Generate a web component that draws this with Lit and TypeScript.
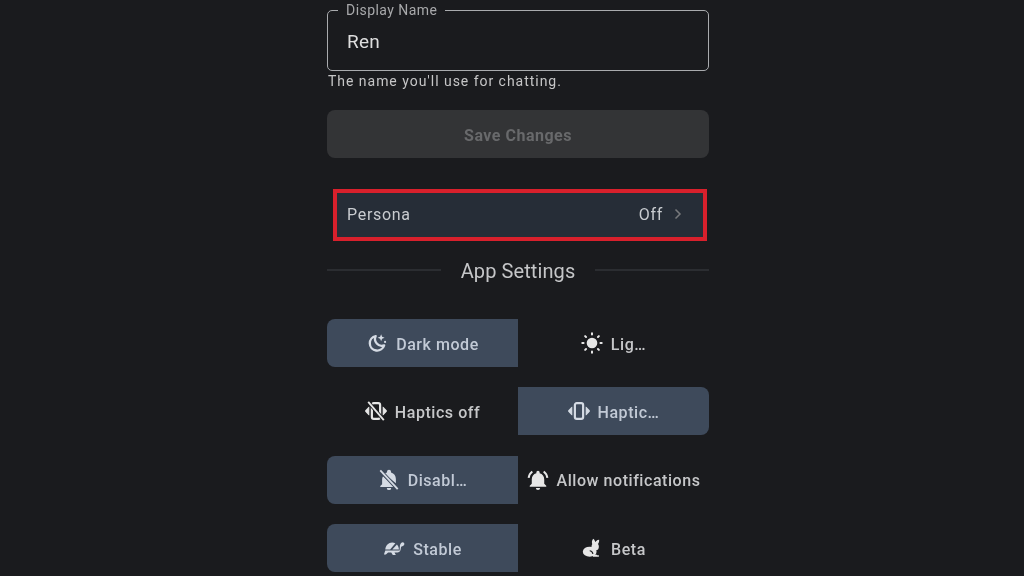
import { LitElement, html, css, svg } from "lit";
import { customElement } from "lit/decorators.js";

const vibBody = svg`<rect x="7.500" y="3.500" width="9" height="17" rx="2" fill="none" stroke="currentColor" stroke-width="2.400"/><path d="M4.300 7.500 1 10.900a1.600 1.600 0 0 0 0 2.200L4.300 16.500zM19.700 7.500l3.300 3.400a1.600 1.600 0 0 1 0 2.200L19.700 16.500z" fill="currentColor" stroke="currentColor" stroke-width="0.800" stroke-linejoin="round"/>`;

const icons = {
  moon: svg`<path d="M10.600 4.400a8 8 0 1 0 9.200 10.200 7.400 7.400 0 0 1-9.200-10.200z" fill="none" stroke="currentColor" stroke-width="2.500" stroke-linejoin="round"/><path d="M16.500 2.500l1.100 2.700 2.700 1.100-2.700 1.100-1.100 2.700-1.100-2.700-2.700-1.100 2.700-1.100z" fill="currentColor"/><circle cx="20.800" cy="10.800" r="1.200" fill="currentColor"/>`,
  sun: svg`<circle cx="12" cy="12" r="5.800" fill="currentColor"/><g fill="none" stroke="currentColor" stroke-width="2.200" stroke-linecap="round"><path d="M12 1.400v1.400M12 21.200v1.400M1.400 12h1.400M21.200 12h1.400M4.500 4.500l1 1M18.500 18.500l1 1M4.500 19.500l1-1M18.500 5.500l1-1"/></g>`,
  vib: vibBody,
  vibOff: svg`${vibBody}<path d="M3.500 2 20.500 22" stroke="#1b1c1f" stroke-width="4"/><path d="M3.500 2 20.500 22" stroke="currentColor" stroke-width="2"/>`,
  bellOff: svg`<path d="M12 23a2.400 2.400 0 0 0 2.400-2.400H9.600A2.400 2.400 0 0 0 12 23zM19.500 15.500V11c0-3.500-2-6.400-5.300-7.200V3a2.200 2.200 0 0 0-4.400 0v.8A6.500 6.500 0 0 0 7 5.400zM5.500 8A9 9 0 0 0 4.500 11v5.500l-2 2v1h16z" fill="currentColor"/><path d="M2.500 1.500 21.500 22" stroke="#3e4a5b" stroke-width="4"/><path d="M2.500 1.500 21.500 22" stroke="currentColor" stroke-width="2"/>`,
  bellOn: svg`<path d="M12 23a2.300 2.300 0 0 0 2.300-2.300H9.700A2.300 2.300 0 0 0 12 23zM18.800 16V11.500c0-3.400-1.900-6.200-5-6.900V3.800a1.800 1.800 0 0 0-3.600 0v.8c-3.100.7-5 3.500-5 6.900V16l-2.200 2.200v1.100h18v-1.100z" fill="currentColor"/><path d="M5.800 2.800A10.500 10.500 0 0 0 1.800 9.800M18.200 2.800a10.500 10.500 0 0 1 4 7" fill="none" stroke="currentColor" stroke-width="2.200"/>`,
  turtle: svg`<path d="M2.500 13.500C2.800 9.300 6 6 10 6c1.300 0 2.500.3 3.500.9L7.800 13.500zM10.200 13.500l5-5.400c1.200 1.300 2 3 2.200 5.400zM18.500 9c.6-1.800 1.800-3.200 3-3.200 1 0 1.800.8 1.800 1.800 0 1.400-1.700 2.700-3.500 2.900l-.7 3.800c-.3 1.800-1.800 2.700-3.300 2.700h-3.300l1.500 2.500h-3.300l-1.700-2.500H5.500l-2.300 2.200H1l1.500-4.500h15.700v-1z" fill="currentColor"/>`,
  rabbit: svg`<ellipse cx="9.500" cy="16" rx="7.500" ry="5.500" fill="currentColor"/><circle cx="15.500" cy="10.500" r="4" fill="currentColor"/><path d="M12.500 8.500C11.300 5.500 12 3 13.500 1.800 15 3 15.900 5 15.700 7.500zM14.800 7.500C15.300 4.800 17.500 3 19.800 3c.3 2.200-.8 4.800-2.800 6.300zM13 19h3.500l1.200 1h1.800v1.500H13z" fill="currentColor"/><path d="M9.500 15c1.500 0 3 1.200 3.500 3.500" fill="none" stroke="#1b1c1f" stroke-width="1.300"/>`,
};

const rows = [
  [
    { icon: icons.moon, label: "Dark mode", on: true },
    { icon: icons.sun, label: "Lig…", on: false },
  ],
  [
    { icon: icons.vibOff, label: "Haptics off", on: false },
    { icon: icons.vib, label: "Haptic…", on: true },
  ],
  [
    { icon: icons.bellOff, label: "Disabl…", on: true },
    { icon: icons.bellOn, label: "Allow notifications", on: false },
  ],
  [
    { icon: icons.turtle, label: "Stable", on: true },
    { icon: icons.rabbit, label: "Beta", on: false },
  ],
];

@customElement("app-root")
export class AppRoot extends LitElement {
  static styles = css`
    :host {
      display: block;
      height: 576px;
      overflow: hidden;
      padding-left: 327px;
      box-sizing: border-box;
      background: #1a1b1e;
      font-family: Roboto, "Liberation Sans", sans-serif;
      color: #e3e3e3;
    }
    .col {
      width: 382px;
      display: flex;
      flex-direction: column;
      filter: blur(0.35px);
    }
    fieldset {
      margin: 0;
      padding: 0 19px;
      height: 71px;
      box-sizing: border-box;
      border: 1.5px solid #a9abae;
      border-radius: 5px;
    }
    legend {
      padding: 0 8px;
      margin-left: -9px;
      font-size: 14px;
      letter-spacing: 0.45px;
      line-height: 20px;
      color: #a8a9ab;
    }
    .value {
      font-size: 19px;
      line-height: 24px;
      letter-spacing: 0.2px;
      color: #dedede;
      margin-top: 10px;
    }
    .help {
      font-size: 14px;
      line-height: 20px;
      letter-spacing: 0.97px;
      color: #c6c6c7;
      margin: 0 0 19px 1px;
      white-space: nowrap;
    }
    .save {
      height: 48px;
      border-radius: 8px;
      background: #333436;
      color: #68696b;
      font-size: 16px;
      font-weight: 700;
      letter-spacing: 0.5px;
      display: flex;
      align-items: center;
      justify-content: center;
      padding-top: 2px;
      box-sizing: border-box;
    }
    .persona {
      margin: 31px 2px 0 6px;
      height: 52px;
      box-sizing: border-box;
      border: 4px solid #d8202c;
      background: #262d37;
      display: flex;
      align-items: center;
      padding: 0 19px 2px 10px;
      font-size: 16px;
      letter-spacing: 0.7px;
      color: #c9ccd0;
    }
    .persona .grow {
      flex: 1;
    }
    .persona svg {
      margin-left: 9px;
      display: block;
    }
    .divider {
      display: flex;
      align-items: center;
      gap: 20px;
      margin-top: 15px;
      height: 28px;
      font-size: 20px;
      letter-spacing: 0.1px;
      color: #c5c6c8;
    }
    .divider span {
      padding-top: 2px;
    }
    .divider i {
      flex: 1;
      height: 1.5px;
      background: #2b2d31;
    }
    .rows {
      display: flex;
      flex-direction: column;
      gap: 20.4px;
      margin-top: 35px;
    }
    .row {
      display: grid;
      grid-template-columns: 191px 191px;
      height: 48px;
    }
    .seg {
      display: flex;
      align-items: center;
      justify-content: center;
      gap: 8px;
      font-size: 16px;
      font-weight: 500;
      letter-spacing: 0.55px;
      color: #c6c7c9;
      white-space: nowrap;
    }
    .seg span {
      padding-top: 2px;
    }
    .seg svg {
      width: 22px;
      height: 22px;
      flex: none;
      color: #e6e6e6;
    }
    .seg.on {
      background: #3e4a5b;
      color: #c2cad6;
    }
    .seg.on svg {
      color: #d5dbe4;
    }
    .seg.on:first-child {
      border-radius: 8px 0 0 8px;
    }
    .seg.on:last-child {
      border-radius: 0 8px 8px 0;
    }
  `;

  render() {
    return html`
      <div class="col">
        <fieldset>
          <legend>Display Name</legend>
          <div class="value">Ren</div>
        </fieldset>
        <div class="help">The name you'll use for chatting.</div>
        <div class="save">Save Changes</div>
        <div class="persona">
          <span class="grow">Persona</span>
          <span>Off</span>
          <svg width="12" height="12" viewBox="0 0 12 12">
            <path d="M3.500 1.500 8 6l-4.500 4.500" fill="none" stroke="#77797c" stroke-width="1.500" />
          </svg>
        </div>
        <div class="divider"><i></i><span>App Settings</span><i></i></div>
        <div class="rows">
          ${rows.map(
            (r) => html`<div class="row">
              ${r.map(
                (s) => html`<div class="seg ${s.on ? "on" : ""}">
                  <svg viewBox="0 0 24 24">${s.icon}</svg><span>${s.label}</span>
                </div>`
              )}
            </div>`
          )}
        </div>
      </div>
    `;
  }
}
